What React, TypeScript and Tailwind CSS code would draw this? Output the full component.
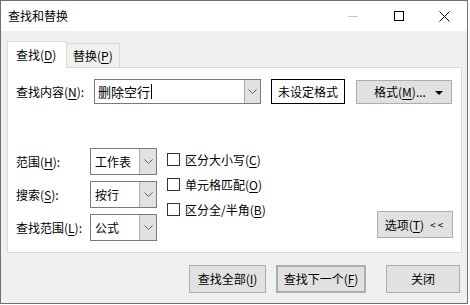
import type { ReactNode } from 'react'

const font = { fontFamily: '"Noto Sans CJK SC", "Noto Sans", sans-serif' }

function Key({ k }: { k: string }) {
  return <span className="underline underline-offset-2">{k}</span>
}

function Chevron() {
  return (
    <svg width="9" height="6" viewBox="0 0 9 6" aria-hidden>
      <polyline points="0.5,0.5 4.5,4.5 8.5,0.5" fill="none" stroke="#606060" strokeWidth="1" />
    </svg>
  )
}

function Select({ value, height = 'h-[27px]' }: { value: string; height?: string }) {
  return (
    <div className={`flex w-[67px] ${height} border border-[#7a7a7a] bg-white`}>
      <span className="flex flex-1 items-center pl-[4px] text-[12px] text-black">{value}</span>
      <span className="flex w-[17px] items-center justify-center border-l border-[#acacac] bg-[#e1e1e1]">
        <Chevron />
      </span>
    </div>
  )
}

function Check({ children }: { children: ReactNode }) {
  return (
    <div className="flex h-[25px] items-center gap-[5px] text-[12px] text-black">
      <span className="h-[13px] w-[13px] border border-[#333] bg-white" />
      <span>{children}</span>
    </div>
  )
}

function Button({ children, className = '' }: { children: ReactNode; className?: string }) {
  return (
    <button
      type="button"
      className={`flex items-center justify-center border border-[#adadad] bg-[#e1e1e1] text-[12px] text-black ${className}`}
    >
      {children}
    </button>
  )
}

export default function App() {
  return (
    <div className="h-[305px] w-[470px] bg-white" style={font}>
      <div className="flex h-[304px] w-[468px] flex-col border border-[#6f6f6f] bg-[#f0f0f0]">
        {/* title bar */}
        <div className="flex h-[30px] items-center bg-white">
          <span className="pl-[7px] text-[12px] text-black">查找和替换</span>
          <div className="ml-auto flex h-full">
            <span className="flex w-[46px] items-center justify-center">
              <span className="h-px w-[10px] bg-[#c6c6c6]" />
            </span>
            <span className="flex w-[46px] items-center justify-center">
              <span className="h-[10px] w-[10px] border border-black" />
            </span>
            <span className="flex w-[45px] items-center justify-center">
              <svg width="11" height="11" viewBox="0 0 11 11" aria-hidden>
                <path d="M0.5 0.5 L10.5 10.5 M10.5 0.5 L0.5 10.5" stroke="#000" strokeWidth="1" />
              </svg>
            </span>
          </div>
        </div>

        <div className="flex flex-col px-[6px] pt-[10px]">
          {/* tabs */}
          <div className="relative z-10 flex items-end text-[12px] text-black">
            <div className="-mb-px flex h-[27px] w-[60px] items-center border border-b-0 border-[#d9d9d9] bg-white pl-[8px]">
              查找(<Key k="D" />)
            </div>
            <div className="flex h-[24px] w-[53px] items-center border border-b-0 border-l-0 border-[#d9d9d9] pl-[6px]">
              替换(<Key k="P" />)
            </div>
          </div>

          {/* panel */}
          <div className="flex h-[186px] w-[455px] flex-col border border-[#d9d9d9] bg-white pl-[8px] pr-[8px] pt-[11px]">
            <div className="flex items-center text-[12px] text-black">
              <span className="w-[78px]">
                查找内容(<Key k="N" />):
              </span>
              <div className="flex h-[25px] w-[167px] border border-[#7a7a7a] bg-white">
                <span className="flex flex-1 items-center pl-[3px] text-[13px]">
                  删除空行
                  <span className="ml-px h-[15px] w-px bg-black" />
                </span>
                <span className="flex w-[16px] items-center justify-center border-l border-[#acacac] bg-[#e1e1e1]">
                  <Chevron />
                </span>
              </div>
              <div className="ml-[10px] flex h-[25px] w-[74px] items-center justify-center border border-black bg-white">
                未设定格式
              </div>
              <Button className="relative ml-[11px] h-[24px] w-[96px] pr-[8px]">
                格式(<Key k="M" />)...
                <svg className="absolute right-[8px] top-[10px]" width="8" height="4" viewBox="0 0 8 4" aria-hidden>
                  <polygon points="0,0 8,0 4,4" fill="#000" />
                </svg>
              </Button>
            </div>

            <div className="mt-[44px] flex items-start">
              <div className="flex flex-col gap-[6px] text-[12px] text-black">
                <div className="flex items-center">
                  <span className="w-[74px]">
                    范围(<Key k="H" />):
                  </span>
                  <Select value="工作表" />
                </div>
                <div className="flex items-center">
                  <span className="w-[74px]">
                    搜索(<Key k="S" />):
                  </span>
                  <Select value="按行" />
                </div>
                <div className="flex items-center">
                  <span className="w-[74px]">
                    查找范围(<Key k="L" />):
                  </span>
                  <Select value="公式" />
                </div>
              </div>

              <div className="ml-[10px] mt-[-1px] flex flex-col">
                <Check>
                  区分大小写(<Key k="C" />)
                </Check>
                <Check>
                  单元格匹配(<Key k="O" />)
                </Check>
                <Check>
                  区分全/半角(<Key k="B" />)
                </Check>
              </div>

              <Button className="ml-auto mt-[63px] h-[27px] w-[76px] gap-[6px]">
                <span>
                  选项(<Key k="T" />)
                </span>
                <span className="text-[10px] tracking-[2px]">&lt;&lt;</span>
              </Button>
            </div>
          </div>

          {/* bottom buttons */}
          <div className="mt-[12px] flex justify-end pr-px">
            <Button className="h-[28px] w-[77px]">
              查找全部(<Key k="I" />)
            </Button>
            <Button className="ml-[10px] h-[28px] w-[90px] border-2 border-[#0078d7]">
              查找下一个(<Key k="F" />)
            </Button>
            <Button className="ml-[20px] h-[28px] w-[74px]">关闭</Button>
          </div>
        </div>
      </div>
    </div>
  )
}
